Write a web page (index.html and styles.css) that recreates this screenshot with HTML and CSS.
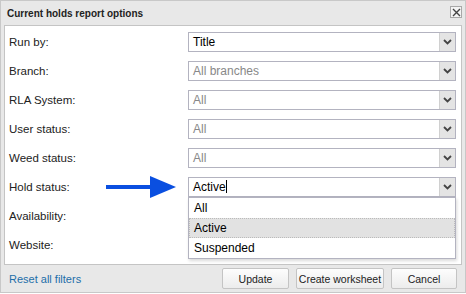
FILE: index.html
```html
<!DOCTYPE html>
<html>
<head>
    <title>Current holds report options</title>
    <link rel="stylesheet" href="styles.css">
</head>
<body>

    <div class="dialog">
        <!-- Title bar -->
        <div class="titlebar">
            <span class="title">Current holds report options</span>
            <span class="close">
                <svg width="9" height="9" viewBox="0 0 9 9"><path d="M1 1L8 8M8 1L1 8" stroke="#444" stroke-width="1.4"/></svg>
            </span>
        </div>

        <!-- Options -->
        <div class="content">
            <div class="row">
                <label>Run by:</label>
                <div class="select"><span class="value">Title</span><span class="arrow"></span></div>
            </div>
            <div class="row">
                <label>Branch:</label>
                <div class="select"><span class="value grey">All branches</span><span class="arrow"></span></div>
            </div>
            <div class="row">
                <label>RLA System:</label>
                <div class="select"><span class="value grey">All</span><span class="arrow"></span></div>
            </div>
            <div class="row">
                <label>User status:</label>
                <div class="select"><span class="value grey">All</span><span class="arrow"></span></div>
            </div>
            <div class="row">
                <label>Weed status:</label>
                <div class="select"><span class="value grey">All</span><span class="arrow"></span></div>
            </div>
            <div class="row">
                <label>Hold status:</label>
                <svg class="pointer" width="72" height="24" viewBox="0 0 72 24">
                    <rect x="0" y="10" width="46" height="4" fill="#0a4fe0"/>
                    <polygon points="44,1 70,12 44,23" fill="#0a4fe0"/>
                </svg>
                <div class="select open">
                    <span class="value">Active<span class="caret"></span></span><span class="arrow"></span>
                    <div class="list">
                        <div class="item">All</div>
                        <div class="item selected">Active</div>
                        <div class="item">Suspended</div>
                    </div>
                </div>
            </div>
            <div class="row">
                <label>Availability:</label>
            </div>
            <div class="row">
                <label>Website:</label>
            </div>
        </div>

        <!-- Footer -->
        <div class="footer">
            <a href="#" class="reset">Reset all filters</a>
            <div class="buttons">
                <button class="btn-update">Update</button>
                <button class="btn-create">Create worksheet</button>
                <button class="btn-cancel">Cancel</button>
            </div>
        </div>
    </div>

</body>
</html>
```

FILE: styles.css
```css
body {
    margin: 0;
    font-family: "Liberation Sans", Arial, sans-serif;
    font-size: 11px;
    color: #222;
    background: white;
}
.dialog {
    width: 464px;
    height: 291px;
    background: #e8e8e8;
    border: 1px solid #c8c8c8;
    display: flex;
    flex-direction: column;
}
.titlebar {
    height: 24px;
    display: flex;
    align-items: center;
    justify-content: space-between;
    padding: 0 3px 0 6px;
}
.title {
    font-weight: bold;
    font-size: 10px;
    color: #222;
}
.close {
    width: 10px;
    height: 10px;
    border: 1px solid #a8a8a8;
    background: #f4f4f4;
    display: flex;
    align-items: center;
    justify-content: center;
    margin-top: -2px;
}
.content {
    background: white;
    margin: 0 3px;
    border: 1px solid #c4c4c4;
    padding-top: 1px;
    box-sizing: border-box;
    height: 240px;
}
.row {
    height: 29px;
    display: flex;
    align-items: center;
    position: relative;
}
.row label {
    width: 183px;
    padding-left: 4px;
    box-sizing: border-box;
    font-size: 11.5px;
}
.pointer {
    position: absolute;
    left: 101px;
    top: 3px;
}
.select {
    width: 266px;
    height: 18px;
    border: 1px solid #b3b3c0;
    display: flex;
    position: relative;
    background: white;
}
.select .value {
    flex: 1;
    padding-left: 4px;
    line-height: 18px;
    font-size: 12px;
    color: #000;
}
.select .grey {
    color: #888;
}
.caret {
    display: inline-block;
    width: 1px;
    height: 13px;
    background: #000;
    vertical-align: -2px;
}
.arrow {
    width: 15px;
    background: #e4e4e4 url("data:image/svg+xml,%3Csvg xmlns='http://www.w3.org/2000/svg' width='9' height='6'%3E%3Cpath d='M1 1L4.5 4.5L8 1' stroke='%23444' stroke-width='1.8' fill='none'/%3E%3C/svg%3E") no-repeat center;
    border-left: 1px solid #d0d0d0;
}
.list {
    position: absolute;
    top: 19px;
    left: -1px;
    width: 266px;
    background: white;
    border: 1px solid #b3b3c0;
    box-shadow: 1px 2px 3px rgba(0, 0, 0, 0.15);
    z-index: 2;
}
.item {
    height: 20px;
    line-height: 18px;
    padding-left: 4px;
    font-size: 12px;
    color: #000;
    border: 1px solid transparent;
    box-sizing: border-box;
}
.item.selected {
    background: #e2e2e2;
    border: 1px dotted #bbb;
}
.footer {
    flex: 1;
    display: flex;
    align-items: center;
    justify-content: space-between;
    padding: 0 8px 0 8px;
}
.reset {
    color: #1d6ea8;
    text-decoration: none;
}
.buttons {
    display: flex;
    gap: 7px;
}
button {
    font-family: "Liberation Sans", Arial, sans-serif;
    font-size: 10.5px;
    color: #222;
    height: 21px;
    background: linear-gradient(#fdfdfd, #ececec);
    border: 1px solid #c4c4c4;
    border-radius: 2px;
    padding: 0;
    white-space: nowrap;
}
.btn-update {
    width: 67px;
}
.btn-create {
    width: 88px;
}
.btn-cancel {
    width: 66px;
}
```
